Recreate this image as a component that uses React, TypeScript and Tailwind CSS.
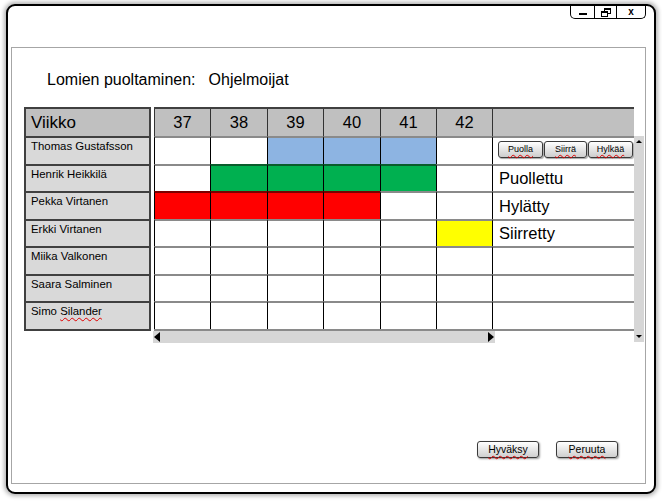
import React from "react"

type Color = "blue" | "green" | "red" | "yellow" | null

interface Row {
  name: string
  misspelt?: string
  cells: Color[]
  status?: string
  buttons?: boolean
}

const rows: Row[] = [
  { name: "Thomas Gustafsson", cells: [null, null, "blue", "blue", "blue", null], buttons: true },
  { name: "Henrik Heikkilä", cells: [null, "green", "green", "green", "green", null], status: "Puollettu" },
  { name: "Pekka Virtanen", cells: ["red", "red", "red", "red", null, null], status: "Hylätty" },
  { name: "Erkki Virtanen", cells: [null, null, null, null, null, "yellow"], status: "Siirretty" },
  { name: "Miika Valkonen", cells: [null, null, null, null, null, null] },
  { name: "Saara Salminen", cells: [null, null, null, null, null, null] },
  { name: "Simo ", misspelt: "Silander", cells: [null, null, null, null, null, null] },
]

const weeks = ["37", "38", "39", "40", "41", "42"]
const widths = ["w-[56px]", "w-[57px]", "w-[56px]", "w-[57px]", "w-[56px]", "w-[56px]"]

const fill: Record<string, string> = {
  blue: "bg-[#8db4e2] border-t-[#8a8a8a]",
  green: "bg-[#00b050] border-t-[#0a5c2c]",
  red: "bg-[#ff0000] border-t-[#7a0000]",
  yellow: "bg-[#ffff00] border-t-[#8a8a8a]",
  none: "bg-white border-t-[#8a8a8a]",
}

const spell = "underline decoration-wavy decoration-[#e00000] decoration-1 underline-offset-2"

function SmallButton({ label, w }: { label: string; w: string }) {
  return (
    <button
      className={`${w} h-[17px] rounded-[3px] border border-[#3a3a3a] bg-gradient-to-b from-white to-[#cdcdcd] shadow-[1px_1px_1px_rgba(0,0,0,0.35)] text-[9px] leading-none text-black flex items-center justify-center`}
    >
      <span className={spell}>{label}</span>
    </button>
  )
}

function DialogButton({ label }: { label: string }) {
  return (
    <button className="w-[62px] h-[17px] rounded-[3px] border border-[#3a3a3a] bg-gradient-to-b from-white to-[#cfcfcf] shadow-[1px_1px_2px_rgba(0,0,0,0.4)] text-[10.5px] leading-none text-black flex items-center justify-center">
      <span className={spell}>{label}</span>
    </button>
  )
}

export default function App() {
  return (
    <div
      className="w-[662px] h-[502px] bg-white pt-[4px] pl-[6px]"
      style={{ fontFamily: '"Liberation Sans", Arial, sans-serif' }}
    >
      <div className="w-[650px] h-[490px] border-2 border-black rounded-[9px] shadow-[0_0_4px_2px_rgba(0,0,0,0.3)] bg-white flex flex-col">
        {/* window controls */}
        <div className="h-[41px] flex justify-end pr-[8px]">
          <div className="h-[13px] flex border border-t-0 border-black rounded-b-[5px] bg-white">
            <div className="w-[24px] flex items-end justify-center pb-[3px] border-r border-black">
              <div className="w-[8px] h-[2px] bg-black" />
            </div>
            <div className="w-[22px] flex items-center justify-center border-r border-black">
              <svg width="10" height="9" viewBox="0 0 10 9">
                <rect x="3.5" y="0.5" width="6" height="5" fill="white" stroke="black" strokeWidth="1" />
                <rect x="3.5" y="0.5" width="6" height="1.5" fill="black" />
                <rect x="0.5" y="3.5" width="6" height="5" fill="white" stroke="black" strokeWidth="1" />
                <rect x="0.5" y="3.5" width="6" height="1.5" fill="black" />
              </svg>
            </div>
            <div className="w-[28px] flex items-center justify-center text-[10px] font-bold leading-none">x</div>
          </div>
        </div>

        {/* panel */}
        <div className="ml-[3px] w-[635px] h-[437px] border border-[#a6a6a6] flex flex-col">
          <div className="mt-[23px] pl-[35px] h-[18px] text-[16px] leading-[18px] text-black flex">
            <span>Lomien puoltaminen:</span>
            <span className="ml-[13px]">Ohjelmoijat</span>
          </div>

          <div className="mt-[18px] pl-[12px] flex items-start">
            {/* names column */}
            <div className="w-[127px] border-2 border-[#404040] bg-[#d9d9d9]">
              <div className="h-[27px] bg-[#c0c0c0] pl-[5px] text-[17px] leading-[27px] text-black">Viikko</div>
              {rows.map((r) => (
                <div
                  key={r.name}
                  className="h-[27.5px] border-t-2 border-[#404040] pl-[5px] pt-[1px] text-[11.4px] leading-[14px] text-black"
                >
                  {r.name}
                  {r.misspelt && <span className={spell}>{r.misspelt}</span>}
                </div>
              ))}
            </div>

            {/* week grid */}
            <div className="ml-[3px] flex flex-col">
              <div className="w-[480px] h-[29px] border-t-2 border-[#404040] bg-[#c0c0c0] flex">
                {weeks.map((w, i) => (
                  <div
                    key={w}
                    className={`${widths[i]} h-full border-l border-[#333] text-[16.5px] leading-[27px] text-center text-black`}
                  >
                    {w}
                  </div>
                ))}
                <div className="w-[142px] h-full border-l border-[#333]" />
              </div>

              <div className="flex">
                <div className="w-[480px] flex flex-col">
                  <div className="border-b-2 border-[#8a8a8a]">
                    {rows.map((r) => (
                      <div key={r.name} className="h-[27.5px] flex">
                        {r.cells.map((c, i) => (
                          <div
                            key={i}
                            className={`${widths[i]} h-full border-l border-l-black border-t-2 ${fill[c ?? "none"]}`}
                          />
                        ))}
                        <div className="w-[142px] h-full border-l border-l-black border-t-2 border-t-[#8a8a8a] bg-white flex items-center pl-[5px]">
                          {r.buttons && (
                            <div className="flex gap-[1px] -mt-[2px]">
                              <SmallButton label="Puolla" w="w-[45px]" />
                              <SmallButton label="Siirrä" w="w-[43px]" />
                              <SmallButton label="Hylkää" w="w-[45px]" />
                            </div>
                          )}
                          {r.status && (
                            <span className="text-[16.5px] leading-none text-black pl-[1px]">{r.status}</span>
                          )}
                        </div>
                      </div>
                    ))}
                  </div>
                  {/* horizontal scrollbar */}
                  <div className="-ml-[1px] w-[342px] h-[12px] bg-[#d6d6d6] flex items-center justify-between px-[1px]">
                    <div className="w-0 h-0 border-y-[5px] border-y-transparent border-r-[6px] border-r-black" />
                    <div className="w-0 h-0 border-y-[5px] border-y-transparent border-l-[6px] border-l-black" />
                  </div>
                </div>
                {/* vertical scrollbar */}
                <div className="w-[10px] h-[206px] bg-[#d6d6d6] flex flex-col items-center justify-between py-[4px]">
                  <div className="w-0 h-0 border-x-[3px] border-x-transparent border-b-[3px] border-b-black" />
                  <div className="w-0 h-0 border-x-[3px] border-x-transparent border-t-[3px] border-t-black" />
                </div>
              </div>
            </div>
          </div>

          <div className="mt-auto mb-[25px] pr-[27px] flex justify-end gap-[17px]">
            <DialogButton label="Hyväksy" />
            <DialogButton label="Peruuta" />
          </div>
        </div>
      </div>
    </div>
  )
}
